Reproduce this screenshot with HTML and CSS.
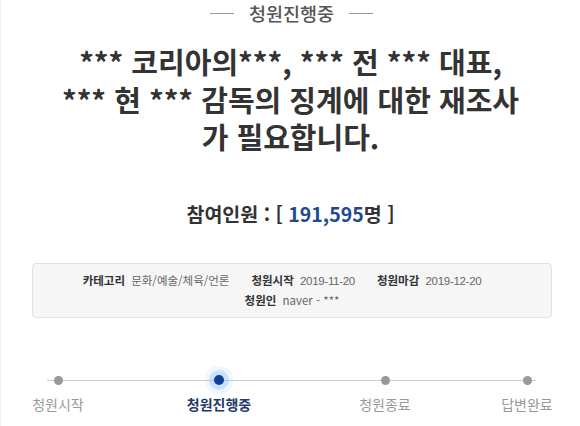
FILE: index.html
```html
<!DOCTYPE html>
<html lang="ko">
<head>
<meta charset="utf-8">
<link rel="stylesheet" href="styles.css">
</head>
<body>
<div class="page">
  <div class="status"><span class="rule"></span><span class="status-text">청원진행중</span><span class="rule"></span></div>
  <h1 class="title">*** 코리아의***, *** 전 *** 대표,<br>*** 현 *** 감독의 징계에 대한 재조사<br>가 필요합니다.</h1>
  <div class="count">참여인원 : [ <span class="num">191,595</span>명 ]</div>
  <div class="info">
    <div class="info-row first">
      <span class="item"><b>카테고리</b> 문화/예술/체육/언론</span>
      <span class="item"><b>청원시작</b> <span class="date">2019-11-20</span></span>
      <span class="item"><b>청원마감</b> <span class="date">2019-12-20</span></span>
    </div>
    <div class="info-row">
      <span class="item"><b>청원인</b> naver - ***</span>
    </div>
  </div>
  <div class="progress">
    <div class="track"></div>
    <div class="steps">
      <div class="step s1"><span class="dot"></span><span class="label">청원시작</span></div>
      <div class="step s2 active"><span class="dot"></span><span class="label">청원진행중</span></div>
      <div class="step s3"><span class="dot"></span><span class="label">청원종료</span></div>
      <div class="step s4"><span class="dot"></span><span class="label">답변완료</span></div>
    </div>
  </div>
</div>
</body>
</html>
```
FILE: styles.css
```css
* { box-sizing: border-box; }
html, body { margin: 0; padding: 0; background: #fff; }
body {
  font-family: "Noto Sans CJK KR", "Noto Sans", sans-serif;
  color: #333;
  width: 580px;
  height: 426px;
  overflow: hidden;
}
.page {
  width: 580px;
  height: 426px;
  border-left: 1px solid #eee;
}
.status {
  display: flex;
  justify-content: center;
  align-items: center;
  gap: 15px;
  height: 26px;
  padding-left: 2px;
}
.status-text {
  font-size: 18.5px;
  font-weight: 500;
  color: #555;
  line-height: 26px;
}
.rule {
  width: 24px;
  height: 1px;
  background: #999;
}
.title {
  margin: 17px 0 0;
  text-align: center;
  font-size: 29px;
  font-weight: 700;
  line-height: 37.5px;
  color: #333;
  letter-spacing: 0;
}
.count {
  margin-top: 45px;
  text-align: center;
  font-size: 19.5px;
  font-weight: 700;
  color: #333;
  line-height: 26px;
}
.count .num { color: #1d4b8f; }
.info {
  margin: 36px 28px 0 31px;
  height: 55px;
  background: #f6f6f6;
  border: 1px solid #e2e2e2;
  border-radius: 4px;
  padding-top: 7px;
  font-size: 11.5px;
  color: #666;
}
.info-row {
  display: flex;
  justify-content: center;
  gap: 22px;
  line-height: 19px;
}
.info-row.first { padding-right: 20px; }
.info-row b { color: #333; font-weight: 700; margin-right: 3px; }
.date { font-family: "Liberation Sans", sans-serif; font-size: 11.5px; letter-spacing: -0.3px; }
.progress {
  position: relative;
  margin-top: 52px;
}
.track {
  position: absolute;
  left: 46px;
  top: 10px;
  width: 489px;
  height: 1px;
  background: #ccc;
}
.steps {
  display: grid;
  grid-template-columns: 17px 80px 81px 80px 86px 80px 62px 80px;
  position: relative;
}
.step {
  display: flex;
  flex-direction: column;
  align-items: center;
}
.s1 { grid-column: 2; }
.s2 { grid-column: 4; }
.s3 { grid-column: 6; }
.s4 { grid-column: 8; }
.dot {
  width: 9px;
  height: 9px;
  border-radius: 50%;
  background: #999;
  margin-top: 6px;
  margin-bottom: 10px;
  position: relative;
}
.active .dot {
  background: #0d3f98;
  width: 10px;
  height: 10px;
  margin-top: 5.5px;
  margin-bottom: 9.5px;
  box-shadow: 0 0 0 5px rgba(140, 185, 245, 0.35), 0 0 0 9px rgba(170, 205, 250, 0.18);
}
.label {
  font-size: 14px;
  color: #999;
  line-height: 18px;
  white-space: nowrap;
}
.active .label {
  color: #223a66;
  font-weight: 700;
}
```
